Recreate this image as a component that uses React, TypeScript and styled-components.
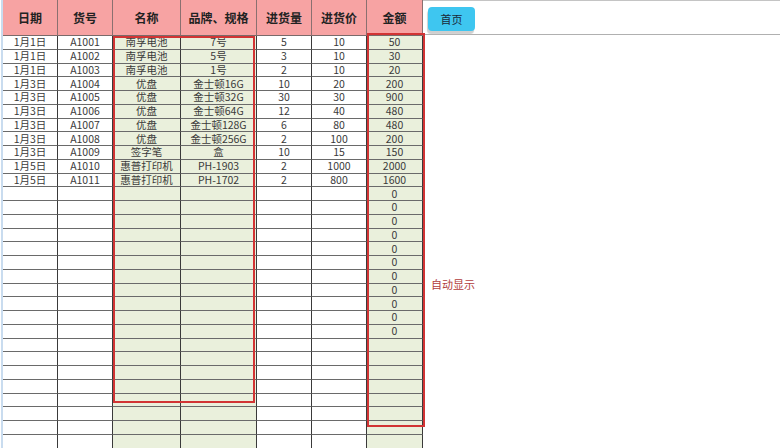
import React from "react";
import styled, { createGlobalStyle } from "styled-components";

const Global = createGlobalStyle`
  html, body { margin: 0; padding: 0; background: #fff; }
  body { font-family: "Noto Sans CJK SC", "Noto Sans", sans-serif; overflow: hidden; }
  #root { width: 780px; height: 448px; overflow: hidden; }
`;

const COLS = "55px 55px 68px 76px 55px 55px 56px";
const ROW_H = 13.75;

const Page = styled.div`
  display: flex;
  width: 780px;
  height: 448px;
  overflow: hidden;
`;

const Sheet = styled.div`
  position: relative;
  flex: none;
  width: 420px;
  margin-left: 3px;
  box-shadow: -2px 0 0 #c9dcef;
`;

const HeaderRow = styled.div`
  display: grid;
  grid-template-columns: ${COLS};
  height: 36px;
`;

const HeadCell = styled.div`
  background: #f7a3a3;
  border-right: 1px solid #8a7070;
  border-bottom: 1px solid #7a6a6a;
  display: flex;
  align-items: center;
  justify-content: center;
  font-size: 12px;
  font-weight: 700;
  color: #222;
  box-sizing: border-box;
`;

const Row = styled.div`
  display: grid;
  grid-template-columns: ${COLS};
  height: ${ROW_H}px;
`;

const Cell = styled.div<{ $fill?: boolean }>`
  background: ${(p) => (p.$fill ? "#eaf0dc" : "#fff")};
  border-right: 1px solid #3a3a3a;
  border-bottom: 1px solid #6a6a6a;
  box-sizing: border-box;
  display: flex;
  align-items: center;
  justify-content: center;
  font-size: 10.5px;
  line-height: 12px;
  color: #3a3a3a;
  white-space: nowrap;
`;

const RedBox = styled.div<{ $l: number; $t: number; $w: number; $h: number }>`
  position: absolute;
  left: ${(p) => p.$l}px;
  top: ${(p) => p.$t}px;
  width: ${(p) => p.$w}px;
  height: ${(p) => p.$h}px;
  border: 2px solid #d23434;
  box-sizing: border-box;
  pointer-events: none;
`;

const Side = styled.div`
  flex: 1;
  display: flex;
  flex-direction: column;
  border-top: 1px solid #c4c4c4;
`;

const SideBar = styled.div`
  height: 34px;
  border-bottom: 1px solid #b0b0b0;
  box-sizing: border-box;
  padding: 4px 0 0 5px;
`;

const HomeButton = styled.button`
  width: 47px;
  height: 24px;
  border: none;
  border-radius: 4px;
  background: #3ec6f0;
  color: #1a2a3a;
  font-family: "Noto Sans CJK SC", sans-serif;
  font-size: 11px;
  padding: 0;
  box-shadow: -1px 3px 1px #cfcfcf;
  cursor: pointer;
`;

const Note = styled.div`
  margin: 241px 0 0 8px;
  font-size: 11px;
  color: #b23c3c;
`;

type R = [string, string, string, string, string, string, string];

const data: R[] = [
  ["1月1日", "A1001", "南孚电池", "7号", "5", "10", "50"],
  ["1月1日", "A1002", "南孚电池", "5号", "3", "10", "30"],
  ["1月1日", "A1003", "南孚电池", "1号", "2", "10", "20"],
  ["1月3日", "A1004", "优盘", "金士顿16G", "10", "20", "200"],
  ["1月3日", "A1005", "优盘", "金士顿32G", "30", "30", "900"],
  ["1月3日", "A1006", "优盘", "金士顿64G", "12", "40", "480"],
  ["1月3日", "A1007", "优盘", "金士顿128G", "6", "80", "480"],
  ["1月3日", "A1008", "优盘", "金士顿256G", "2", "100", "200"],
  ["1月3日", "A1009", "签字笔", "盒", "10", "15", "150"],
  ["1月5日", "A1010", "惠普打印机", "PH-1903", "2", "1000", "2000"],
  ["1月5日", "A1011", "惠普打印机", "PH-1702", "2", "800", "1600"],
];

const rows: R[] = [];
for (let i = 0; i < 30; i++) {
  if (i < data.length) rows.push(data[i]);
  else if (i < 22) rows.push(["", "", "", "", "", "", "0"]);
  else rows.push(["", "", "", "", "", "", ""]);
}

const headers = ["日期", "货号", "名称", "品牌、规格", "进货量", "进货价", "金额"];
const filled = [false, false, true, true, false, false, true];

export default function App() {
  return (
    <>
      <Global />
      <Page>
        <Sheet>
          <HeaderRow>
            {headers.map((h) => (
              <HeadCell key={h}>{h}</HeadCell>
            ))}
          </HeaderRow>
          {rows.map((r, i) => (
            <Row key={i}>
              {r.map((c, j) => (
                <Cell key={j} $fill={filled[j]}>
                  {c}
                </Cell>
              ))}
            </Row>
          ))}
          <RedBox $l={110} $t={36} $w={142} $h={367} />
          <RedBox $l={364} $t={33} $w={58} $h={394} />
        </Sheet>
        <Side>
          <SideBar>
            <HomeButton>首页</HomeButton>
          </SideBar>
          <Note>自动显示</Note>
        </Side>
      </Page>
    </>
  );
}
